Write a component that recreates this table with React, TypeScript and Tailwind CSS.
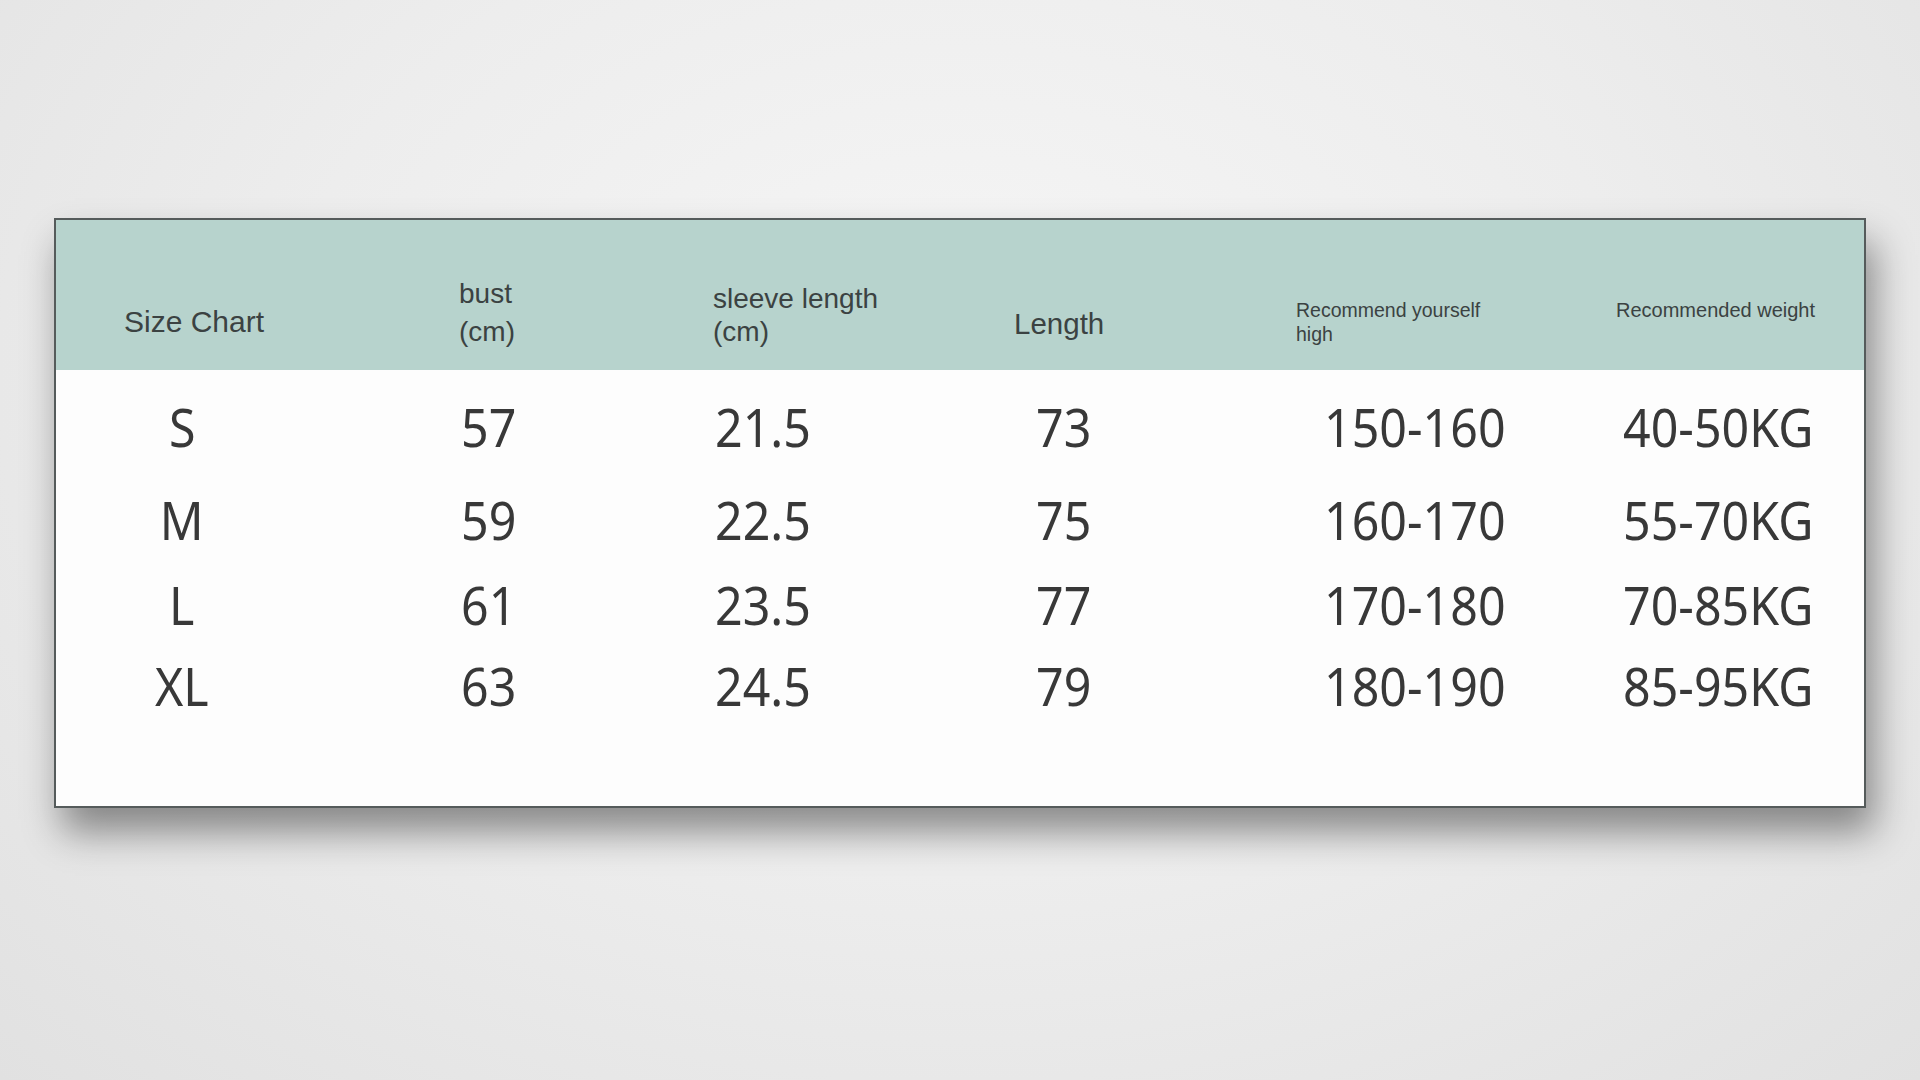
const headers = [
  { lines: ["Size Chart"], cls: "pt-[84px] text-[30px] leading-[36px]" },
  { lines: ["bust", "(cm)"], cls: "pt-[55px] text-[28px] leading-[38px]" },
  { lines: ["sleeve length", "(cm)"], cls: "pt-[62px] text-[28px] leading-[33px]" },
  { lines: ["Length"], cls: "pt-[86px] text-[29.5px] leading-[36px]" },
  { lines: ["Recommend yourself", "high"], cls: "pt-[78px] text-[19.5px] leading-[24px]" },
  { lines: ["Recommended weight"], cls: "pt-[78px] text-[20px] leading-[24px]" },
];

const rows = [
  { size: "S", bust: "57", sleeve: "21.5", length: "73", high: "150-160", weight: "40-50KG", mt: "mt-[27px]" },
  { size: "M", bust: "59", sleeve: "22.5", length: "75", high: "160-170", weight: "55-70KG", mt: "mt-[33px]" },
  { size: "L", bust: "61", sleeve: "23.5", length: "77", high: "170-180", weight: "70-85KG", mt: "mt-[25px]" },
  { size: "XL", bust: "63", sleeve: "24.5", length: "79", high: "180-190", weight: "85-95KG", mt: "mt-[21px]" },
];

const cols = "grid grid-cols-[335px_254px_301px_282px_320px_1fr] pl-[68px]";

const Num = ({ children, origin = "origin-left" }: { children: React.ReactNode; origin?: string }) => (
  <span className={`inline-block scale-x-[0.93] ${origin}`}>{children}</span>
);

export default function App() {
  return (
    <div
      className="w-[1920px] h-[1080px] overflow-hidden bg-[radial-gradient(ellipse_at_50%_35%,#f6f6f6_0%,#ededed_50%,#e1e1e1_100%)] pt-[218px] pl-[54px]"
      style={{ fontFamily: '"Liberation Sans", Arial, sans-serif' }}
    >
      <div className="w-[1812px] h-[590px] border-2 border-[#555b5b] bg-[#fdfdfd] shadow-[8px_24px_36px_rgba(0,0,0,0.42)] flex flex-col">
        <div className={`${cols} h-[150px] bg-[#b7d3cd] text-[#3b4242]`}>
          {headers.map((h) => (
            <div key={h.lines[0]} className={h.cls}>
              {h.lines.map((l) => (
                <div key={l} className="whitespace-nowrap">
                  {l}
                </div>
              ))}
            </div>
          ))}
        </div>

        <div className="text-[#383838] text-[52px] leading-[60px] font-['Noto_Sans','Open_Sans',sans-serif]">
          {rows.map((r) => (
            <div key={r.size} className={`${cols} ${r.mt} h-[60px]`}>
              <div className="w-[116px] text-center">
                <Num origin="origin-center">{r.size}</Num>
              </div>
              <div className="pl-[2px]">
                <Num>{r.bust}</Num>
              </div>
              <div className="pl-[2px]">
                <Num>{r.sleeve}</Num>
              </div>
              <div className="w-[100px] text-center">
                <Num origin="origin-center">{r.length}</Num>
              </div>
              <div className="pl-[28px]">
                <Num>{r.high}</Num>
              </div>
              <div className="pl-[7px]">
                <Num>{r.weight}</Num>
              </div>
            </div>
          ))}
        </div>
      </div>
    </div>
  );
}
